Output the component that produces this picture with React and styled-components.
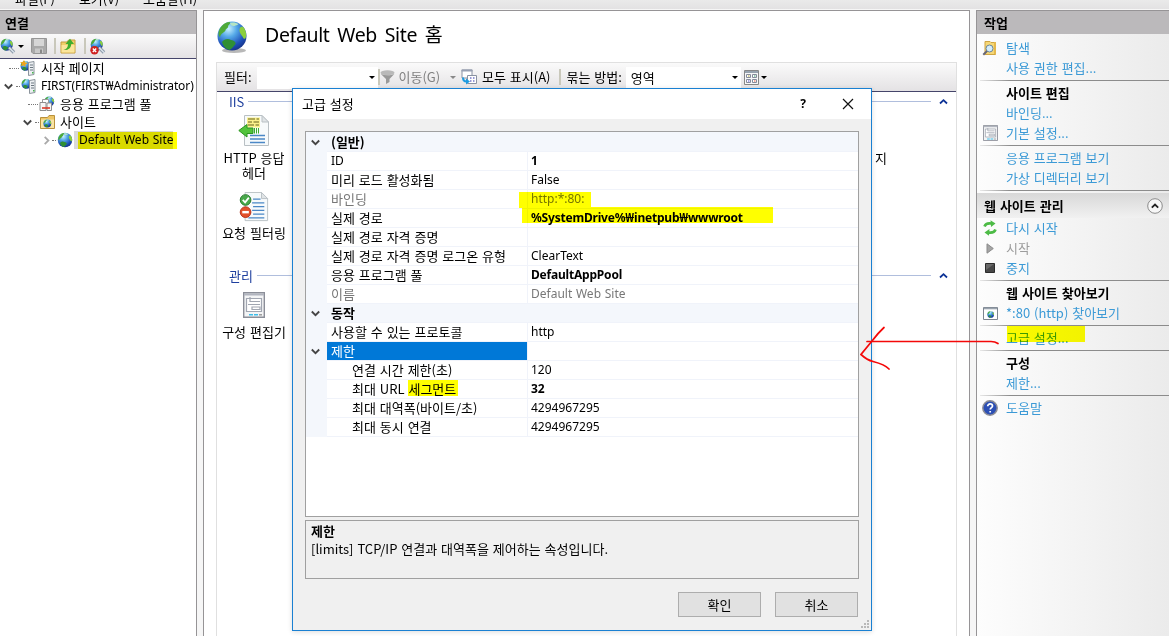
import React from "react";
import styled, { createGlobalStyle, css } from "styled-components";

const Global = createGlobalStyle`
  * { box-sizing: border-box; }
  body { margin: 0; background: #f6f6f6; overflow: hidden; }
`;

const hangul = css`
  font-family: "Noto Sans CJK KR", sans-serif;
  font-size: 13px;
  word-spacing: 1px;
`;

/* Text runs: Korean by default, $latin for Western runs */
const Text = styled.span`
  ${hangul}
  ${(p) => p.$latin && css`font-family: "Noto Sans", "Noto Sans CJK KR", sans-serif; font-size: 12px; word-spacing: 0.6px;`}
  letter-spacing: ${(p) => p.$ls || 0}px;
  font-weight: ${(p) => (p.$bold ? 700 : 400)};
  color: ${(p) => p.$color || "#000"};
  white-space: nowrap;
  line-height: 18px;
`;

const Window = styled.div`
  position: relative;
  width: 1169px;
  height: 636px;
  overflow: hidden;
  display: flex;
  flex-direction: column;
  background: #f6f6f6;
`;

const MenuBar = styled.div`
  display: flex;
  flex: none;
  align-items: flex-end;
  height: 9px;
  margin-bottom: 1px;
  padding: 0 0 1px 15px;
  gap: 24px;
  overflow: hidden;
  background: linear-gradient(#eaeaea, #e3e2e3);
`;

const Panes = styled.div`
  display: grid;
  grid-template-columns: 197px 767px 193px;
  column-gap: 6px;
  height: 626px;
`;

const Pane = styled.section`
  display: flex;
  flex-direction: column;
  min-width: 0;
  border: 1px solid #969496;
  border-width: ${(p) => p.$edges};
  background: ${(p) => p.$bg || "#fff"};
`;

const PaneHeader = styled.div`
  display: flex;
  align-items: center;
  flex: none;
  height: 23px;
  padding-left: ${(p) => p.$pad}px;
  background: #bbb9bb;
`;

const Toolbar = styled.div`
  display: flex;
  align-items: center;
  flex: none;
  height: 25px;
  border-bottom: 1px solid #45456a;
  background: linear-gradient(#fafafa, #e4e2e4);
`;

const Divider = styled.i`
  width: 2px;
  height: 16px;
  margin: ${(p) => p.$m};
  background: #c9c8bb;
`;

const Caret = styled.i`
  width: 0;
  height: 0;
  flex: none;
  border: 3px solid transparent;
  border-top-color: ${(p) => p.$color || "#000"};
  border-bottom: 0;
  margin: ${(p) => p.$m || 0};
`;

const Tree = styled.div`
  display: flex;
  flex-direction: column;
`;

const TreeRow = styled.div`
  display: flex;
  align-items: center;
  height: 18px;
  padding-left: ${(p) => p.$indent}px;
`;

const Expander = styled.span`
  display: flex;
  width: 11px;
  justify-content: center;
`;

const Dots = styled.i`
  width: ${(p) => p.$w}px;
  margin: 0 1px 0 ${(p) => p.$l || 0}px;
  border-top: 1px dotted #777;
`;

const NodeIcon = styled.span`
  display: flex;
  margin-right: ${(p) => p.$gap || 4}px;
`;

const SelectedNode = styled.span`
  display: flex;
  align-items: center;
  height: 18px;
  width: 99px;
  padding-left: 5px;
  background: #d9d9d9;
`;

const PageTitle = styled.header`
  display: flex;
  align-items: center;
  flex: none;
  height: 51px;
  padding-left: 12px;
  gap: 17px;
`;

const TitleText = styled.h1`
  margin: 0 0 3px;
  font: 400 19.5px/26px "Noto Sans", "Noto Sans CJK KR", sans-serif;
  letter-spacing: -0.35px;
  word-spacing: 3px;
`;

const Board = styled.div`
  display: flex;
  flex-direction: column;
  flex: 1;
  width: 741px;
  margin-left: 12px;
  border: 1px solid #e0e0e0;
  border-bottom: 0;
`;

const FilterBar = styled(Toolbar)`
  height: 29px;
  padding-left: 7px;
`;

const Combo = styled.div`
  display: flex;
  align-items: center;
  justify-content: space-between;
  width: ${(p) => p.$w}px;
  height: 22px;
  margin: 1px 0 0 ${(p) => p.$ml}px;
  padding: 0 3px 0 5px;
  background: #fff;
`;

const GroupHead = styled.div`
  display: flex;
  align-items: center;
  height: 19px;
  padding: 0 8px 0 12px;
`;

const GroupLine = styled.i`
  flex: 1;
  height: 1px;
  margin: 0 8px 0 4px;
  background: #b0bedd;
`;

const Features = styled.div`
  display: flex;
  justify-content: space-between;
  height: ${(p) => p.$h}px;
  padding: ${(p) => p.$top}px 69px 0 0;
`;

const Feature = styled.div`
  display: flex;
  flex-direction: column;
  align-items: center;
  text-align: center;
  width: ${(p) => p.$w || 74}px;
`;

const FeatureIcon = styled.span`
  display: flex;
  align-items: center;
  justify-content: center;
  height: ${(p) => p.$h || 32}px;
  margin-bottom: ${(p) => p.$gap}px;
`;

const FeatureLabel = styled.span`
  ${hangul}
  line-height: 15px;
  white-space: nowrap;
`;

const Actions = styled.div`
  display: flex;
  flex-direction: column;
  padding-top: 4px;
`;

const Action = styled.div`
  display: flex;
  align-items: center;
  height: 20px;
`;

const ActionIcon = styled.span`
  display: flex;
  justify-content: center;
  width: 26px;
  margin-right: 3px;
`;

const Rule = styled.i`
  height: 1px;
  margin: 2px 0 2px 3px;
  background: linear-gradient(90deg, #e8e8e8, #8c8c8c 30px);
`;

const ActionsHeader = styled.div`
  display: flex;
  align-items: center;
  justify-content: space-between;
  height: 25px;
  padding: 0 6px 0 7px;
  background: linear-gradient(#d8d8d8, #f1f1f1);
`;

const Dialog = styled.div`
  position: absolute;
  left: 292px;
  top: 88px;
  width: 580px;
  height: 543px;
  display: flex;
  flex-direction: column;
  border: 1px solid #1a80d2;
  background: #f0f0f0;
  box-shadow: 0 1px 5px rgba(0, 0, 0, 0.14);
`;

const DialogTitle = styled.div`
  display: flex;
  align-items: center;
  flex: none;
  height: 30px;
  padding: 0 17px 0 9px;
  background: #fff;
`;

const TitleButtons = styled.span`
  display: flex;
  align-items: center;
  gap: 36px;
  margin-left: auto;
`;

const PropertyGrid = styled.div`
  height: 386px;
  flex: none;
  margin: 12px 12px 0;
  border: 1px solid #a0a0a0;
  background: #fff;
`;

const PropertyRow = styled.div`
  display: grid;
  grid-template-columns: 21px 200px 1fr;
  height: ${(p) => (p.$first ? 20 : 19)}px;
  background: ${(p) => (p.$category ? "#f4f7fc" : "#fff")};
`;

const Gutter = styled.span`
  display: flex;
  align-items: center;
  justify-content: center;
  background: #f4f7fc;
  padding-right: 2px;
`;

const NameCell = styled.span`
  display: flex;
  align-items: center;
  padding-left: ${(p) => (p.$nested ? 25 : 4)}px;
  background: ${(p) => (p.$selected ? "#0078d7" : "transparent")};
  border-bottom: 1px solid #f0f3fa;
`;

const ValueCell = styled.span`
  display: flex;
  align-items: center;
  padding-left: 3px;
  border: solid #f0f3fa;
  border-width: 0 0 1px ${(p) => (p.$category ? 0 : 1)}px;
`;

const Description = styled.div`
  display: flex;
  flex-direction: column;
  flex: none;
  height: 59px;
  margin: 3px 12px 0;
  padding: 1px 5px;
  border: 1px solid #a0a0a0;
`;

const Buttons = styled.div`
  display: flex;
  justify-content: flex-end;
  gap: 14px;
  padding: 13px 13px 0 0;
`;

const Button = styled.button`
  ${hangul}
  width: 83px;
  height: 25px;
  padding: 0;
  border: 1px solid #adadad;
  background: #e1e1e1;
  color: #000;
`;

const Grip = styled.svg`
  position: absolute;
  right: 1px;
  bottom: 1px;
`;

/* Fluorescent pen strokes laid over the window */
const Marker = styled.i`
  position: absolute;
  left: ${(p) => p.$x}px;
  top: ${(p) => p.$y}px;
  width: ${(p) => p.$w}px;
  height: ${(p) => p.$h}px;
  background: #ff0;
  mix-blend-mode: multiply;
`;

const Pen = styled.svg`
  position: absolute;
  left: 856px;
  top: 322px;
`;

const Chevron = ({ dir = "down", color = "#444", w = 9 }) => (
  <svg width={w} height={w} viewBox="0 0 9 9" fill="none" stroke={color} strokeWidth="1.8">
    <path d={dir === "down" ? "M.8 2.5 4.5 6.2 8.2 2.5" : dir === "up" ? "M1 6.5 4.5 3.2 8 6.5" : "M2.7.8 6.4 4.5 2.7 8.2"} />
  </svg>
);

const GlobeArt = () => (
  <>
    <defs>
      <radialGradient id="sea" cx=".38" cy=".25" r=".8">
        <stop offset="0" stopColor="#c9f1ff" />
        <stop offset=".35" stopColor="#55a9e8" />
        <stop offset=".75" stopColor="#1d4fb8" />
        <stop offset="1" stopColor="#163083" />
      </radialGradient>
    </defs>
    <circle cx="16" cy="16" r="14.5" fill="url(#sea)" />
    <path d="M2.5 13C3.5 7 8 2.5 13.5 2c2 1-.5 2.5-1.5 4 1 2-2.500 2.500-2.500 4.500C8 13 5 13 4 17c-1-.5-1.500-2-1.500-4z" fill="#4faa38" />
    <path d="M6 22c2-3 6-4 9-2 3 .5 5 2 4.500 4-1.500 2-3.500 4.500-6 6C9.500 29 7 26 6 22z" fill="#2f8f35" />
    <path d="M24 8c2-2 3-1 4 0 2 3 2.500 6 2 9-1 3-2.500 2-3.500-.5C24.500 14 22.500 11 24 8z" fill="#8bcf3d" />
    <path d="M14 3c3-1 6-.5 8.500 1-1 1.500-3 1-4 2-2 .5-4-1-4.500-3z" fill="#b6e4c3" />
  </>
);

const Globe = ({ size = 16 }) => (
  <svg width={size} height={size} viewBox="0 0 32 32"><GlobeArt /></svg>
);

const BigGlobe = () => (
  <svg width="32" height="34" viewBox="0 0 32 34">
    <ellipse cx="18" cy="30.500" rx="12" ry="2.500" fill="#9a9a9a" opacity=".7" />
    <GlobeArt />
  </svg>
);

const GlobeTool = ({ error }) => (
  <svg width="17" height="17" viewBox="0 0 17 17">
    <g transform="scale(.42)"><GlobeArt /></g>
    <path d="M9 9.500l5 5" stroke="#8a98a8" strokeWidth="3.400" />
    <path d="M9 9.500l5 5" stroke="#dbe4ec" strokeWidth="1.400" />
    {error && (
      <>
        <circle cx="4.500" cy="12.300" r="4.200" fill="#cf2222" />
        <path d="M2.800 10.600l3.400 3.400m0-3.400-3.400 3.400" stroke="#fff" strokeWidth="1.400" />
      </>
    )}
  </svg>
);

const Server = ({ star }) => (
  <svg width="16" height="16" viewBox="0 0 16 16">
    <g transform="translate(0 .5) scale(.34)"><GlobeArt /></g>
    {star && <path d="M4 0l1.200 2.500L8 3 5.500 4.500 5.500 7 3.500 5.500 1 6 2 3.800 0 2.200 2.800 2z" fill="#f0a51c" />}
    <path d="M8.500 2.500 14 1.500v13l-5.500 1z" fill="#eceff2" stroke="#8b949c" />
    <path d="M10 5h3M10 7.500h3M10 10h3" stroke="#6b7680" />
    <path d="M12 12h1.500v1.500H12z" fill="#43b649" />
  </svg>
);

const Disk = () => (
  <svg width="16" height="16" viewBox="0 0 16 16">
    <path d="M.5.500h15v15H2L.5 14z" fill="#a9a9a9" stroke="#969696" />
    <path d="M3 1h10v7H3z" fill="#d6d6d6" />
    <path d="M4 10.500h8V15H4z" fill="#c9c9c9" />
    <path d="M9 11.500h2V15H9z" fill="#888" />
  </svg>
);

const FolderUp = () => (
  <svg width="16" height="16" viewBox="0 0 16 16">
    <path d="M1 4h6l1.500-2H15v13H1z" fill="#f0cf6a" stroke="#c49c3c" />
    <path d="M1.500 7h13v7.500h-13z" fill="#fbe59b" />
    <path d="M3.500 12c3-.5 4.500-3 4.500-6H5.500L10 .8 14 6h-2.800c0 4-3 6.500-7.700 6z" fill="#3fae2f" />
  </svg>
);

const Pools = () => (
  <svg width="16" height="16" viewBox="0 0 16 16">
    <g transform="translate(4.500 0) scale(.35)"><GlobeArt /></g>
    <path d="M3.500 3.500h6v9h-6z" fill="#fff" stroke="#999" />
    <path d="M1 6.500h6v8H1zM8 7h4.500v7.500H8z" fill="#f7f7f7" stroke="#8e8e8e" />
    <path d="M3 12h8" stroke="#dc3a2a" strokeWidth="1.600" />
  </svg>
);

const SiteFolder = () => (
  <svg width="15" height="14" viewBox="0 0 15 14">
    <path d="M.5 2.500h7l1.500-2h5.500v13H.5z" fill="#edc565" stroke="#b9913c" />
    <path d="M1 4.500h13V13H1z" fill="#fae5a4" />
    <g transform="translate(3 4.200) scale(.27)"><GlobeArt /></g>
  </svg>
);

const Funnel = () => (
  <svg width="15" height="14" viewBox="0 0 15 14">
    <ellipse cx="7.500" cy="2.800" rx="7" ry="2.500" fill="#b9b9b9" />
    <path d="M.8 4 6 9v5l3.500-2V9l4.800-5c-4 1.800-9 1.800-13.500 0z" fill="#999" />
  </svg>
);

const ShowAll = () => (
  <svg width="17" height="16" viewBox="0 0 17 16">
    <path d="M1 1h10v8H1z" fill="#fff" stroke="#8a92a2" />
    <path d="M.5.500h11v2H.5z" fill="#99a1b3" />
    <path d="M6.500 6.500h9v8h-9z" fill="#fff" stroke="#8a92a2" />
    <path d="M9 9h1.500M12 9h1.500M9 12h1.500M12 12h1.500" stroke="#7678c8" strokeWidth="1.500" />
    <path d="M2 8.500c0 3 1.500 4 3.500 4" fill="none" stroke="#1e9be0" strokeWidth="2" />
    <path d="M5 9.500 9 12.500l-4 3z" fill="#1e9be0" />
  </svg>
);

const ViewMode = () => (
  <svg width="15" height="15" viewBox="0 0 15 15">
    <path d="M.5.500h14v14H.5z" fill="#f8f8f8" stroke="#878787" />
    <path d="M1 1h13v2H1z" fill="#97a3af" />
    <g fill="#fff" stroke="#858b9b"><path d="M2.500 4.500h4v3h-4zM8.500 4.500h4v3h-4zM2.500 9.500h4v3h-4zM8.500 9.500h4v3h-4z" /></g>
    <path d="M4 6h1.500" stroke="#b2a530" /><path d="M10 6h1.500" stroke="#359f66" />
    <path d="M4 11h1.500" stroke="#5449ce" /><path d="M10 11h1.500" stroke="#df5639" />
  </svg>
);

const Page = () => (
  <>
    <path d="M6.500.500H24L30.500 7v23.500h-24z" fill="#f7fafb" stroke="#b9c0c4" />
    <path d="M24 .5V7h6.500z" fill="#e0e4e6" stroke="#b9c0c4" />
  </>
);

const HeadersIcon = () => (
  <svg width="32" height="32" viewBox="0 0 32 32">
    <Page />
    <path d="M9 2.500h13v10H9z" fill="#fbf08a" />
    <path d="M10 4h7m1.500 0H21M10 7h4m1.500 0H21M10 10h6m1.500 0H21" stroke="#66631a" strokeWidth="1.200" />
    <path d="M12 20.500h15M12 24h15M12 27.500h15" stroke="#4b88c6" strokeWidth="1.300" />
    <path d="M.8 15.500 9 9.500v3.500h6v5.500H9V22z" fill="#52c33c" stroke="#2b9420" />
    <path d="M16.500 13v5.500M18.500 13v5.500M20.500 13v5.500" stroke="#3bad2a" />
  </svg>
);

const FilterIcon = () => (
  <svg width="30" height="30" viewBox="0 0 32 32">
    <Page />
    <path d="M15 7.500h8M14 11.500h13M15 15.500h12M14 19.500h13M15 23.500h12M10 27.500h17" stroke="#4b88c6" strokeWidth="1.300" />
    <circle cx="7" cy="8.500" r="5.700" fill="#48a84a" stroke="#26772c" />
    <path d="M4 8.500 6.500 11 10.500 6" fill="none" stroke="#fff" strokeWidth="1.900" />
    <circle cx="7" cy="21.500" r="5.700" fill="#e2502a" stroke="#b5301a" />
    <path d="M3.500 21.500h7" stroke="#fff" strokeWidth="2.600" />
  </svg>
);

const ConfigIcon = ({ w = 22, h = 26 }) => (
  <svg width={w} height={h} viewBox="0 0 22 26" preserveAspectRatio="none">
    <path d="M.7.700h20.600v24.600H.7z" fill="#f3f4f5" stroke="#8b8e98" strokeWidth="1.400" />
    <path d="M1 2.500h20" stroke="#b1b5bf" strokeWidth="2" />
    <path d="M3.500 6.500h15v13h-15z" fill="#fff" stroke="#a1a6b1" strokeWidth="1.200" />
    <path d="M7 5v4.500h10M5 12.500h12M9 15h8v2.500H9z" fill="none" stroke="#a1a6b1" strokeWidth="1.200" />
    <path d="M6 22.800h4m1 0h4" stroke="#3dbde9" strokeWidth="1.500" />
    <path d="M16 22.800h3" stroke="#999" strokeWidth="1.500" />
  </svg>
);

const Explore = () => (
  <svg width="16" height="16" viewBox="0 0 16 16">
    <path d="M3 1.500h5l1 1h4.500v12H3z" fill="#f5d777" stroke="#cfa544" />
    <path d="M12 2h2v12h-2z" fill="#e5b94d" />
    <circle cx="7.500" cy="8.500" r="3.500" fill="#d3ecfb" stroke="#69859c" />
    <path d="M5 11 1.300 14.700" stroke="#667" strokeWidth="2" />
  </svg>
);

const Restart = () => (
  <svg width="14" height="16" viewBox="0 0 14 16" fill="none" stroke="#4dbb46" strokeWidth="2.600">
    <path d="M1.500 6.500C2.500 3.500 6 3 9 3.600" /><path d="M7.500.300 12.500 3.500 8 7z" fill="#4dbb46" stroke="none" />
    <path d="M12.500 9.500C11.500 12.500 8 13 5 12.400" /><path d="M6.500 9 1.500 12.500 6 15.700z" fill="#4dbb46" stroke="none" />
  </svg>
);

const Play = () => (
  <svg width="8" height="11" viewBox="0 0 8 11"><path d="M1 .8 7.300 5.500 1 10.200z" fill="#a5a5a5" stroke="#8b8b8b" /></svg>
);

const Stop = () => (
  <svg width="10" height="10" viewBox="0 0 10 10"><path d="M.5.500h9v9h-9z" fill="#484848" stroke="#2c2c2c" /><path d="M1 1h8L1 7z" fill="#6a6a6a" /></svg>
);

const Browse = () => (
  <svg width="15" height="13" viewBox="0 0 15 13">
    <path d="M.5.500h14v12H.5z" fill="#fff" stroke="#7d8590" />
    <path d="M1 1.500h13" stroke="#9aa3ae" strokeWidth="1.600" />
    <g transform="translate(4 3.800) scale(.23)"><GlobeArt /></g>
  </svg>
);

const Help = () => (
  <svg width="16" height="16" viewBox="0 0 16 16">
    <circle cx="8" cy="8" r="7.200" fill="#2c4fb4" stroke="#8d8d95" strokeWidth="1.500" />
    <path d="M5.700 6.300c0-3.200 4.800-3 4.800-.2C10.500 7.700 8.200 7.700 8.200 9.600M8.200 10.900v1.700" fill="none" stroke="#fff" strokeWidth="1.700" />
  </svg>
);

const Collapse = () => (
  <svg width="16" height="16" viewBox="0 0 16 16" fill="none">
    <circle cx="8" cy="8" r="7.300" fill="#f7f7f7" stroke="#8b8b8b" />
    <path d="M4.800 9.700 8 6.600l3.200 3.100" stroke="#222" strokeWidth="1.800" />
  </svg>
);

const LINK = "#3c9ad6";
const actions = [
  { text: "탐색", icon: <Explore /> },
  { text: "사용 권한 편집..." },
  "rule",
  { text: "사이트 편집", head: true },
  { text: "바인딩..." },
  { text: "기본 설정...", icon: <ConfigIcon w={15} h={16} /> },
  "rule",
  { text: "응용 프로그램 보기" },
  { text: "가상 디렉터리 보기" },
  "rule",
];
const manage = [
  { text: "다시 시작", icon: <Restart /> },
  { text: "시작", icon: <Play />, color: "#9c9c9c" },
  { text: "중지", icon: <Stop /> },
  "rule",
  { text: "웹 사이트 찾아보기", head: true },
  { text: "*:80 (http) 찾아보기", icon: <Browse /> },
  "rule",
  { text: "고급 설정..." },
  "rule",
  { text: "구성", head: true },
  { text: "제한..." },
  "rule",
  { text: "도움말", icon: <Help /> },
];

const ActionList = ({ items }) =>
  items.map((a, i) =>
    a === "rule" ? (
      <Rule key={i} />
    ) : (
      <Action key={i}>
        <ActionIcon>{a.icon}</ActionIcon>
        <Text $bold={a.head} $color={a.head ? "#000" : a.color || LINK}>{a.text}</Text>
      </Action>
    )
  );

const properties = [
  { name: "(일반)", category: true, open: true },
  { name: "ID", latin: true, value: "1", bold: true },
  { name: "미리 로드 활성화됨", value: "False" },
  { name: "바인딩", value: "http:*:80:", dim: true },
  { name: "실제 경로", value: "%SystemDrive%₩inetpub₩wwwroot", bold: true, ls: -0.2 },
  { name: "실제 경로 자격 증명", value: "" },
  { name: "실제 경로 자격 증명 로그온 유형", value: "ClearText" },
  { name: "응용 프로그램 풀", value: "DefaultAppPool", bold: true, ls: -0.2 },
  { name: "이름", value: "Default Web Site", dim: true },
  { name: "동작", category: true, open: true },
  { name: "사용할 수 있는 프로토콜", value: "http" },
  { name: "제한", value: "", open: true, selected: true },
  { name: "연결 시간 제한(초)", value: "120", nested: true },
  { name: "최대 URL 세그먼트", value: "32", bold: true, nested: true },
  { name: "최대 대역폭(바이트/초)", value: "4294967295", nested: true },
  { name: "최대 동시 연결", value: "4294967295", nested: true },
];

const AdvancedSettings = () => (
  <Dialog>
    <DialogTitle>
      <Text>고급 설정</Text>
      <TitleButtons>
        <Text $latin $bold>?</Text>
        <svg width="12" height="12" viewBox="0 0 12 12" stroke="#111" strokeWidth="1.200"><path d="M1 1l10 10M11 1 1 11" /></svg>
      </TitleButtons>
    </DialogTitle>
    <PropertyGrid>
      {properties.map((p, i) => {
        const color = p.dim ? "#777" : p.selected ? "#fff" : "#000";
        return (
          <PropertyRow key={i} $category={p.category} $first={i === 0}>
            <Gutter>{p.open && <Chevron />}</Gutter>
            <NameCell $nested={p.nested} $selected={p.selected}>
              <Text $bold={p.category} $latin={p.latin} $color={color}>{p.name}</Text>
            </NameCell>
            <ValueCell $category={p.category}>
              <Text $latin $bold={p.bold} $ls={p.ls} $color={p.dim ? "#777" : "#000"}>{p.value}</Text>
            </ValueCell>
          </PropertyRow>
        );
      })}
    </PropertyGrid>
    <Description>
      <Text $bold>제한</Text>
      <Text>[limits] TCP/IP 연결과 대역폭을 제어하는 속성입니다.</Text>
    </Description>
    <Buttons>
      <Button>확인</Button>
      <Button>취소</Button>
    </Buttons>
    <Grip width="9" height="9" viewBox="0 0 9 9" fill="#b8b8b8">
      <path d="M0 6h2v2H0zM3 6h2v2H3zM6 6h2v2H6zM3 3h2v2H3zM6 3h2v2H6zM6 0h2v2H6z" />
    </Grip>
  </Dialog>
);

export default function App() {
  return (
    <Window>
      <Global />
      <MenuBar>
        <Text>파일(F)</Text>
        <Text>보기(V)</Text>
        <Text>도움말(H)</Text>
      </MenuBar>
      <Panes>
        <Pane $edges="1px 1px 0 0">
          <PaneHeader $pad={5}><Text $bold>연결</Text></PaneHeader>
          <Toolbar>
            <GlobeTool />
            <Caret $m="0 7px 0 1px" />
            <Disk />
            <Divider $m="0 4px 0 7px" />
            <FolderUp />
            <Divider $m="0 4px 0 8px" />
            <GlobeTool error />
          </Toolbar>
          <Tree>
            <TreeRow $indent={9}>
              <Dots $w={10} />
              <NodeIcon $gap={5}><Server star /></NodeIcon>
              <Text>시작 페이지</Text>
            </TreeRow>
            <TreeRow $indent={3}>
              <Expander><Chevron /></Expander>
              <Dots $w={4} $l={2} />
              <NodeIcon $gap={4}><Server /></NodeIcon>
              <Text $latin $ls={-0.1}>FIRST(FIRST₩Administrator)</Text>
            </TreeRow>
            <TreeRow $indent={28}>
              <Dots $w={10} />
              <NodeIcon $gap={5}><Pools /></NodeIcon>
              <Text>응용 프로그램 풀</Text>
            </TreeRow>
            <TreeRow $indent={22}>
              <Expander><Chevron /></Expander>
              <Dots $w={4} $l={2} />
              <NodeIcon $gap={5}><SiteFolder /></NodeIcon>
              <Text>사이트</Text>
            </TreeRow>
            <TreeRow $indent={41}>
              <Expander><Chevron dir="right" color="#aaa" /></Expander>
              <Dots $w={4} />
              <NodeIcon $gap={1}><Globe /></NodeIcon>
              <SelectedNode><Text $latin>Default Web Site</Text></SelectedNode>
            </TreeRow>
          </Tree>
        </Pane>

        <Pane $edges="1px 1px 0 1px">
          <PageTitle>
            <BigGlobe />
            <TitleText>Default Web Site 홈</TitleText>
          </PageTitle>
          <Board>
            <FilterBar>
              <Text>필터:</Text>
              <Combo $w={121} $ml={5}><span /><Caret /></Combo>
              <Divider as="span" />
              <Funnel />
              <Text $color="#808080" style={undefined}>&nbsp;이동(G)</Text>
              <Caret $color="#888" $m="0 5px 0 10px" />
              <ShowAll />
              <Text>&nbsp;모두 표시(A)</Text>
              <Divider $m="0 5px 0 9px" />
              <Text>묶는 방법:</Text>
              <Combo $w={115} $ml={4}><Text>영역</Text><Caret /></Combo>
              <Caret $color="transparent" $m="0 -3px 0 0" />
              <ViewMode />
              <Caret $m="0 0 0 2px" />
            </FilterBar>
            <GroupHead>
              <Text $color="#1e3f9e">IIS</Text><GroupLine /><Chevron dir="up" color="#0c3296" />
            </GroupHead>
            <Features $h={76} $top={4}>
              <Feature>
                <FeatureIcon $gap={3}><HeadersIcon /></FeatureIcon>
                <FeatureLabel>HTTP 응답<br />헤더</FeatureLabel>
              </Feature>
              <Feature $w={12}>
                <FeatureIcon $gap={3} />
                <FeatureLabel>지</FeatureLabel>
              </Feature>
            </Features>
            <Features $h={79} $top={4}>
              <Feature>
                <FeatureIcon $gap={2}><FilterIcon /></FeatureIcon>
                <FeatureLabel>요청 필터링</FeatureLabel>
              </Feature>
            </Features>
            <GroupHead>
              <Text $color="#1e3f9e">관리</Text><GroupLine /><Chevron dir="up" color="#0c3296" />
            </GroupHead>
            <Features $h={70} $top={4}>
              <Feature>
                <FeatureIcon $gap={3}><ConfigIcon /></FeatureIcon>
                <FeatureLabel>구성 편집기</FeatureLabel>
              </Feature>
            </Features>
          </Board>
        </Pane>

        <Pane $edges="1px 0 0 1px" $bg="linear-gradient(90deg, #fdfdfd, #ebebeb)">
          <PaneHeader $pad={7}><Text $bold>작업</Text></PaneHeader>
          <Actions>
            <ActionList items={actions} />
            <ActionsHeader><Text $bold>웹 사이트 관리</Text><Collapse /></ActionsHeader>
            <ActionList items={manage} />
          </Actions>
        </Pane>
      </Panes>

      <AdvancedSettings />

      <Marker $x={78} $y={132} $w={99} $h={17} />
      <Marker $x={519} $y={192} $w={72} $h={16} />
      <Marker $x={522} $y={207} $w={251} $h={16} />
      <Marker $x={408} $y={380} $w={50} $h={16} />
      <Marker $x={1007} $y={326} $w={78} $h={16} />
      <Pen width="148" height="52" viewBox="856 322 148 52" fill="none" stroke="#f40808" strokeWidth="1.700" strokeLinecap="round">
        <path d="M867 341.500H991Q995 341.500 998 343.500" />
        <path d="M884 327.500Q878 333 872 341L861 354.500Q867 360 873 361.500 885 364.500 889 369" />
      </Pen>
    </Window>
  );
}
